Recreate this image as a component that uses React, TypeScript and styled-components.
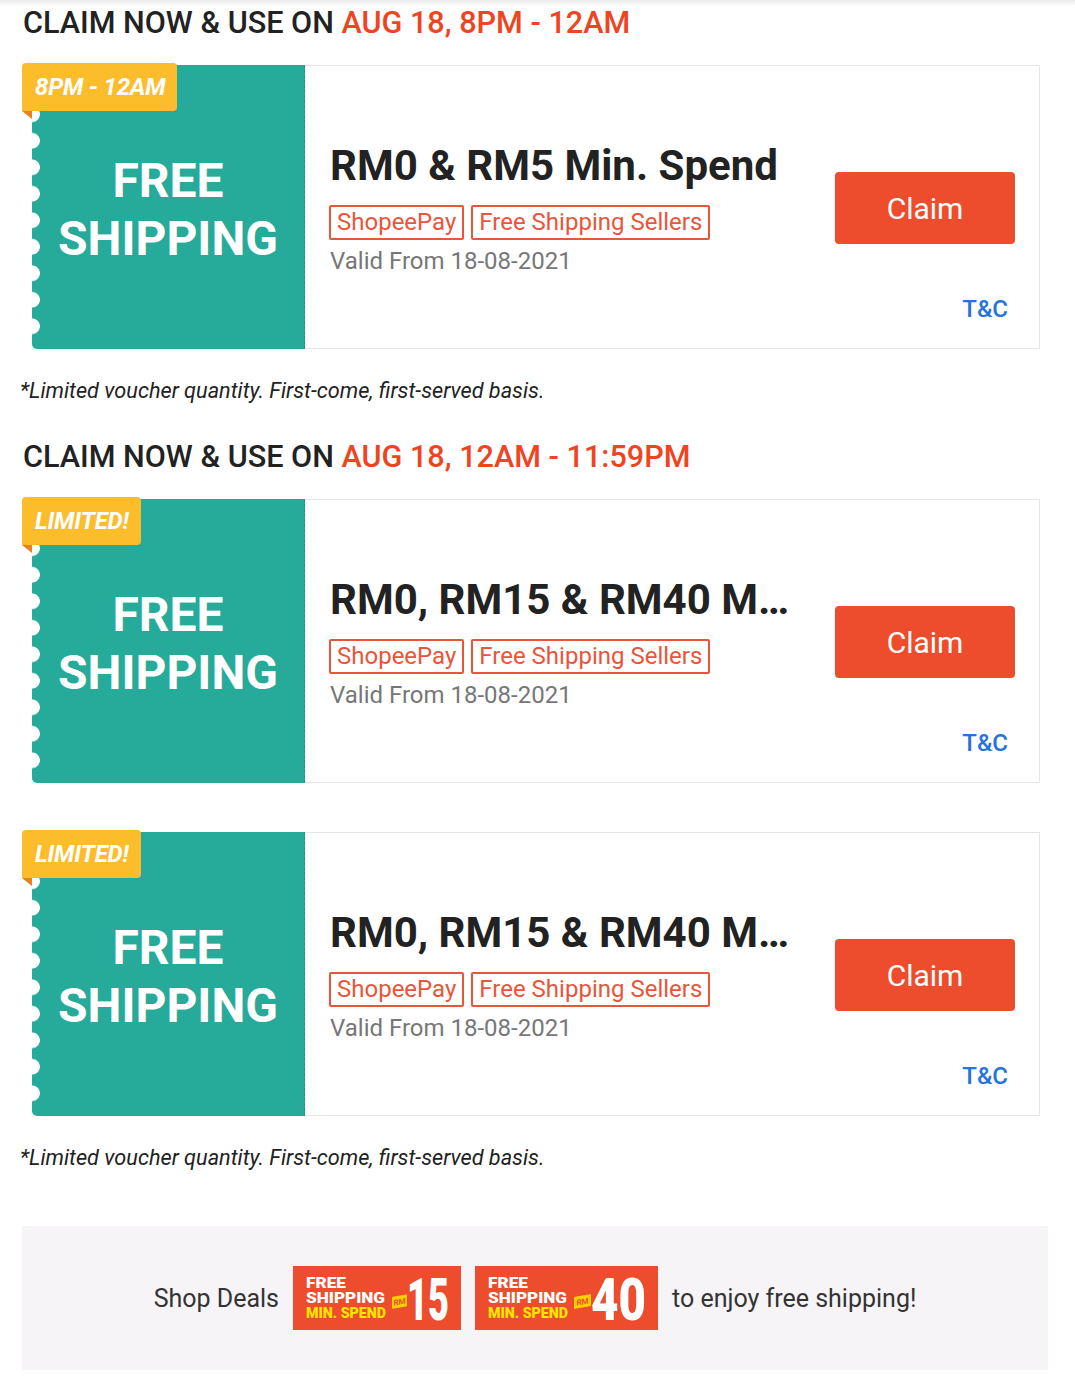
import React from "react";
import styled, { createGlobalStyle } from "styled-components";

const GlobalStyle = createGlobalStyle`
  html, body { margin: 0; padding: 0; background: #fff; }
  body {
    font-family: Roboto, "Noto Sans", "Liberation Sans", sans-serif;
    -webkit-font-smoothing: antialiased;
  }
  * { box-sizing: border-box; }
`;

const Page = styled.div`
  width: 1075px;
  min-height: 1384px;
  padding: 2px 27px 0 20px;
  background: linear-gradient(to bottom, #e9e9e9 0, #ffffff 6px) no-repeat;
`;

const SectionTitle = styled.h2<{ $top?: number }>`
  margin: ${(p) => p.$top ?? 0}px 0 21px 3px;
  font-size: 30.6px;
  font-weight: 500;
  line-height: 42px;
  color: #222;
  white-space: nowrap;
`;

const Highlight = styled.span`
  color: #f0441f;
`;

const CardStack = styled.div`
  display: flex;
  flex-direction: column;
  gap: 49px;
`;

const Card = styled.div`
  position: relative;
  display: flex;
  margin-left: 12px;
  width: 1008px;
  height: 284px;
`;

const Ticket = styled.div`
  position: relative;
  flex: 0 0 273px;
  background: #26aa99;
  border-radius: 0 0 0 5px;
  border-right: 1px dashed rgba(0, 0, 0, 0.14);
  display: flex;
  align-items: center;
  justify-content: center;
  padding-top: 6px;

  &::before {
    content: "";
    position: absolute;
    left: 0;
    top: 0;
    bottom: 12px;
    width: 9px;
    background: radial-gradient(circle at 0 50%, #fff 0 7.5px, rgba(255, 255, 255, 0) 8.2px) 0 36px / 9px 26.5px repeat-y;
  }
`;

const TicketText = styled.div`
  color: #fff;
  font-size: 48px;
  font-weight: 700;
  line-height: 58px;
  text-align: center;
`;

const Badge = styled.div`
  position: absolute;
  left: -10px;
  top: -2px;
  height: 48px;
  padding: 0 12px 0 13px;
  display: flex;
  align-items: center;
  background: #fcbd2d;
  border-radius: 4px 4px 4px 0;
  color: #fff;
  font-size: 24px;
  font-weight: 700;
  font-style: italic;
  letter-spacing: -0.2px;
  z-index: 2;

  &::after {
    content: "";
    position: absolute;
    left: 0;
    top: 100%;
    width: 0;
    height: 0;
    border-top: 8px solid #e8821c;
    border-left: 10px solid transparent;
  }
`;

const Body = styled.div`
  position: relative;
  flex: 1;
  display: flex;
  align-items: center;
  justify-content: space-between;
  padding: 2px 24px 0 25px;
  border: 1px solid #e6e6e6;
  border-left: none;
  background: #fff;
`;

const Info = styled.div`
  width: 462px;
  min-width: 0;
  display: flex;
  flex-direction: column;
  align-items: flex-start;
`;

const Title = styled.div`
  max-width: 100%;
  font-size: 42px;
  font-weight: 700;
  line-height: 50px;
  color: #222;
  white-space: nowrap;
  overflow: hidden;
  text-overflow: ellipsis;
`;

const TagRow = styled.div`
  display: flex;
  gap: 7px;
  margin-top: 14px;
  margin-left: -1px;
`;

const Tag = styled.span`
  border: 2px solid #e9553a;
  border-radius: 2px;
  padding: 0 6px;
  font-size: 24px;
  line-height: 31px;
  color: #e9553a;
  white-space: nowrap;
`;

const Valid = styled.div`
  margin-top: 6px;
  font-size: 24px;
  line-height: 30px;
  color: #777;
`;

const ClaimButton = styled.button`
  width: 180px;
  height: 72px;
  border: none;
  border-radius: 4px;
  background: #ee4d2d;
  color: #fff;
  font-family: inherit;
  font-size: 30px;
  font-weight: 400;
  cursor: pointer;
`;

const Terms = styled.a`
  position: absolute;
  right: 31px;
  bottom: 24px;
  font-size: 24px;
  font-weight: 500;
  line-height: 30px;
  color: #2673dd;
  text-decoration: none;
`;

const Note = styled.p`
  margin: 30px 0 0 0;
  font-size: 21.7px;
  font-style: italic;
  line-height: 24px;
  color: #222;
  white-space: nowrap;
`;

const Banner = styled.div`
  margin: 56px 0 0 2px;
  width: 1026px;
  height: 144px;
  background: #f6f4f7;
  display: flex;
  align-items: center;
  justify-content: center;
  gap: 14px;
`;

const BannerText = styled.span`
  font-size: 25px;
  color: #333;
  white-space: nowrap;
`;

type Voucher = {
  badge: string;
  title: string;
};

const VoucherCard = ({ badge, title }: Voucher) => (
  <Card>
    <Ticket>
      <Badge>{badge}</Badge>
      <TicketText>
        FREE
        <br />
        SHIPPING
      </TicketText>
    </Ticket>
    <Body>
      <Info>
        <Title>{title}</Title>
        <TagRow>
          <Tag>ShopeePay</Tag>
          <Tag>Free Shipping Sellers</Tag>
        </TagRow>
        <Valid>Valid From 18-08-2021</Valid>
      </Info>
      <ClaimButton>Claim</ClaimButton>
      <Terms>T&amp;C</Terms>
    </Body>
  </Card>
);

type DealProps = {
  width: number;
  amount: string;
  rmX: number;
  rmW: number;
  numX: number;
  numW: number;
};

const DealBadge = ({ width, amount, rmX, rmW, numX, numW }: DealProps) => (
  <svg width={width} height={64} viewBox={`0 0 ${width} 64`} style={{ display: "block" }}>
    <rect x="0" y="0" width={width} height="64" fill="#ee4d2d" />
    <g fontFamily="Roboto, 'Open Sans', sans-serif" fontWeight={900} fontSize={14}>
      <text x="13" y="21.5" fill="#fff" textLength={40} lengthAdjust="spacingAndGlyphs">FREE</text>
      <text x="13" y="36.5" fill="#fff" textLength={79} lengthAdjust="spacingAndGlyphs">SHIPPING</text>
      <text x="13" y="51.5" fill="#ffe400" textLength={80} lengthAdjust="spacingAndGlyphs">MIN. SPEND</text>
    </g>
    <g transform={`translate(${rmX} 31) skewY(-10)`}>
      <rect x="0" y="0" width={rmW} height="12" rx="1" fill="#ffd000" />
      <text
        x={rmW / 2}
        y="9"
        fill="#ee4d2d"
        fontFamily="Roboto, sans-serif"
        fontWeight={700}
        fontSize={8}
        textAnchor="middle"
      >
        RM
      </text>
    </g>
    <text
      x={numX}
      y="54"
      fill="#fff"
      fontFamily="Roboto, sans-serif"
      fontWeight={900}
      fontSize={60}
      textLength={numW}
      lengthAdjust="spacingAndGlyphs"
    >
      {amount}
    </text>
  </svg>
);

export default function App() {
  return (
    <>
      <GlobalStyle />
      <Page>
        <SectionTitle>
          CLAIM NOW &amp; USE ON <Highlight>AUG 18, 8PM - 12AM</Highlight>
        </SectionTitle>
        <VoucherCard badge="8PM - 12AM" title="RM0 & RM5 Min. Spend" />
        <Note>*Limited voucher quantity. First-come, first-served basis.</Note>

        <SectionTitle $top={33}>
          CLAIM NOW &amp; USE ON <Highlight>AUG 18, 12AM - 11:59PM</Highlight>
        </SectionTitle>
        <CardStack>
          <VoucherCard badge="LIMITED!" title="RM0, RM15 & RM40 Min. Spend" />
          <VoucherCard badge="LIMITED!" title="RM0, RM15 & RM40 Min. Spend" />
        </CardStack>
        <Note>*Limited voucher quantity. First-come, first-served basis.</Note>

        <Banner>
          <BannerText>Shop Deals</BannerText>
          <DealBadge width={168} amount="15" rmX={99} rmW={15} numX={114} numW={42} />
          <DealBadge width={183} amount="40" rmX={99} rmW={17} numX={116} numW={55} />
          <BannerText>to enjoy free shipping!</BannerText>
        </Banner>
      </Page>
    </>
  );
}
